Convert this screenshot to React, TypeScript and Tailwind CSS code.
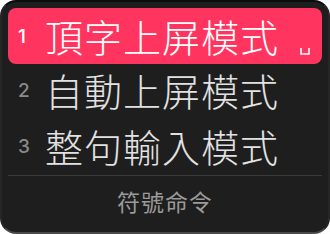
import React from "react";

const rows = [
  { n: "1", t: "頂字上屏模式", active: true },
  { n: "2", t: "自動上屏模式", active: false },
  { n: "3", t: "整句輸入模式", active: false },
];

export default function App() {
  return (
    <div className="w-[330px] h-[234px] bg-white">
      <div
        className="w-[330px] h-[234px] rounded-[16px] bg-[#1e1e1e] border-2 border-t-[#0c0c0c] border-x-[#262626] border-b-[#4a4a4a] px-[6px] pt-[6px] flex flex-col"
        style={{ fontFamily: '"Noto Sans CJK TC", "Noto Sans", sans-serif' }}
      >
        {rows.map((r) => (
          <div
            key={r.n}
            className={`relative h-[56px] flex items-center rounded-[8px] ${r.active ? "bg-[#ff3560]" : ""} ${r.active ? "mb-[-2px]" : ""}`}
          >
            <span
              className={`w-[37px] pl-[10px] text-left text-[19px] font-medium leading-none ${r.active ? "text-white" : "text-[#8a8a8a]"}`}
              style={{ fontFamily: '"Inter", "Liberation Sans", sans-serif' }}
            >
              {r.n}
            </span>
            <span
              className={`text-[38px] font-light leading-none tracking-[1px] ${r.active ? "text-white" : "text-[#e2e2e2]"}`}
            >
              {r.t}
            </span>
            {r.active && (
              <svg
                className="absolute right-[12px] bottom-[9px]"
                width="10"
                height="7"
                viewBox="0 0 10 7"
              >
                <path d="M1 0 V6 H9 V0" fill="none" stroke="white" strokeWidth="1.6" />
              </svg>
            )}
          </div>
        ))}
        <div className="h-px bg-[#3a3a3a] mt-[1px]" />
        <div className="flex-1 flex items-center justify-center text-[23px] text-[#9a9a9a] pb-[6px] tracking-[1px]">
          符號命令
        </div>
      </div>
    </div>
  );
}
